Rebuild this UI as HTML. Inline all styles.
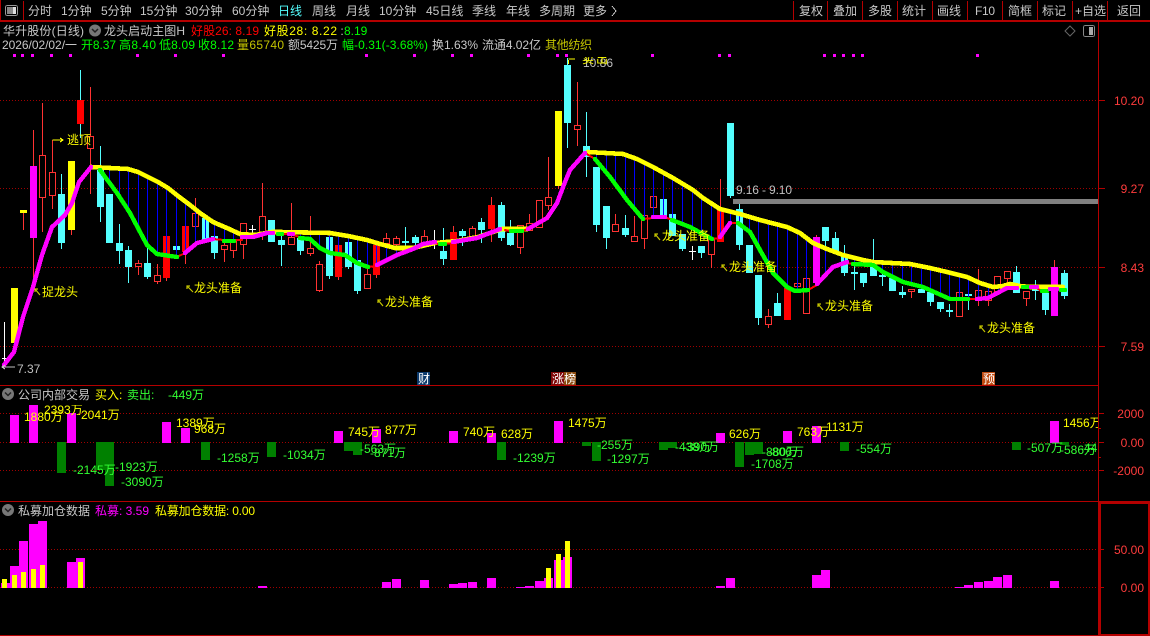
<!DOCTYPE html>
<html><head><meta charset="utf-8"><style>
html,body{margin:0;padding:0;background:#000;width:1150px;height:636px;overflow:hidden}
svg{display:block}
text{font-family:"Liberation Sans","WenQuanYi Zen Hei","Noto Sans CJK SC",sans-serif;font-size:12px;white-space:pre}
.g{fill:#c8c8c8}.y{fill:#ff0}.n{fill:#0f0}.gg{fill:#3f3}.m{fill:#f0f}.r{fill:#ff3c3c}.o{fill:#c4c400}
</style></head><body>
<svg width="1150" height="636" viewBox="0 0 1150 636" xmlns="http://www.w3.org/2000/svg" shape-rendering="crispEdges">
<defs>
<clipPath id="c1"><rect x="0" y="57" width="1098" height="328"/></clipPath>
<clipPath id="c2"><rect x="0" y="405" width="1098" height="96"/></clipPath>
</defs>
<rect width="1150" height="636" fill="#000"/>

<!-- frame -->
<g fill="#b40000">
<rect x="0" y="0" width="1" height="20"/>
<rect x="23" y="1" width="1" height="20"/>
<rect x="0" y="20" width="1150" height="2"/>
<rect x="1098" y="21" width="1" height="615"/>
<rect x="0" y="385" width="1098" height="1"/>
<rect x="0" y="501" width="1150" height="1"/>
<rect x="0" y="635" width="1150" height="1"/>
<rect x="1099" y="502" width="51" height="2"/>
<rect x="1099" y="634" width="51" height="2"/>
<rect x="1099" y="502" width="2" height="134"/>
<rect x="1148" y="502" width="2" height="134"/>
<path d="M793 1h1v20h-1zM827 1h1v20h-1zM862 1h1v20h-1zM897 1h1v20h-1zM932 1h1v20h-1zM967 1h1v20h-1zM1002 1h1v20h-1zM1037 1h1v20h-1zM1072 1h1v20h-1zM1107 1h1v20h-1z"/>
<path d="M1099 100h6v1h-6zM1099 188h6v1h-6zM1099 267h6v1h-6zM1099 346h6v1h-6zM1099 413h5v1h-5zM1099 442h5v1h-5zM1099 470h5v1h-5zM1099 428h2v1h-2zM1099 457h2v1h-2zM1099 549h5v1h-5zM1099 587h5v1h-5zM1099 568h2v1h-2z"/>
</g>

<!-- grid -->
<g stroke="#a00000" stroke-width="1" stroke-dasharray="1 2" fill="none">
<path d="M0 100.5H1098M0 188.5H1098M0 267.5H1098M0 346.5H1098M0 413.5H1098M0 442.5H1098M0 470.5H1098M0 549.5H1098M0 587.5H1098"/>
</g>

<!-- top bar -->
<rect x="5.5" y="5.5" width="12" height="10" rx="2" fill="none" stroke="#999"/>
<rect x="7" y="7" width="6" height="7" fill="#888"/>
<rect x="13" y="7" width="3" height="7" fill="#ddd"/>
<g class="g">
<text x="28" y="15">分时</text>
<text x="61" y="15">1分钟</text>
<text x="101" y="15">5分钟</text>
<text x="140" y="15">15分钟</text>
<text x="185" y="15">30分钟</text>
<text x="232" y="15">60分钟</text>
<text x="278" y="15" style="fill:#54ffff">日线</text>
<text x="312" y="15">周线</text>
<text x="346" y="15">月线</text>
<text x="379" y="15">10分钟</text>
<text x="426" y="15">45日线</text>
<text x="472" y="15">季线</text>
<text x="506" y="15">年线</text>
<text x="539" y="15">多周期</text>
<text x="583" y="15">更多</text>
<text x="799" y="15">复权</text>
<text x="833" y="15">叠加</text>
<text x="868" y="15">多股</text>
<text x="902" y="15">统计</text>
<text x="937" y="15">画线</text>
<text x="975" y="15" textLength="20">F10</text>
<text x="1008" y="15">简框</text>
<text x="1042" y="15">标记</text>
<text x="1075" y="15">+自选</text>
<text x="1117" y="15">返回</text>
</g>
<path d="M612 6l4 5-4 5" fill="none" stroke="#c8c8c8"/>

<!-- info lines -->
<text x="3" y="35" class="g" textLength="81">华升股份(日线)</text>
<circle cx="95" cy="30.5" r="6" fill="#777" shape-rendering="auto"/>
<path d="M92 29l3 3 3-3" fill="none" stroke="#222" stroke-width="1.5" shape-rendering="auto"/>
<text x="104" y="35" class="g" textLength="81">龙头启动主图H</text>
<text x="191" y="35" fill="#f00" textLength="68">好股26: 8.19</text>
<text x="264" y="35" class="y" textLength="73">好股28: 8.22</text>
<text x="337" y="35" class="g"> :</text>
<text x="344" y="35" class="n">8.19</text>

<text x="2" y="49" class="g" textLength="75">2026/02/02/一</text>
<text x="81" y="49" class="n" textLength="35">开8.37</text>
<text x="119" y="49" class="n" textLength="37">高8.40</text>
<text x="159" y="49" class="n" textLength="36">低8.09</text>
<text x="198" y="49" class="n" textLength="36">收8.12</text>
<text x="237" y="49" class="o" textLength="47">量65740</text>
<text x="288" y="49" class="g" textLength="50">额5425万</text>
<text x="342" y="49" class="n" textLength="86">幅-0.31(-3.68%)</text>
<text x="432" y="49" class="g" textLength="46">换1.63%</text>
<text x="482" y="49" class="g" textLength="59">流通4.02亿</text>
<text x="545" y="49" class="o" textLength="47">其他纺织</text>
<path d="M1070 26l5 5-5 5-5-5z" fill="none" stroke="#666" shape-rendering="auto"/>
<rect x="1083.5" y="25.5" width="11" height="11" rx="2" fill="none" stroke="#888"/>
<rect x="1089" y="27" width="4" height="8" fill="#aaa"/>

<!-- dots -->
<path fill="#f0f" d="M13 54h3v3h-3zM21 54h3v3h-3zM31 54h3v3h-3zM50 54h3v3h-3zM69 54h3v3h-3zM136 54h3v3h-3zM174 54h3v3h-3zM222 54h3v3h-3zM365 54h3v3h-3zM413 54h3v3h-3zM451 54h3v3h-3zM470 54h3v3h-3zM527 54h3v3h-3zM556 54h3v3h-3zM565 54h3v3h-3zM651 54h3v3h-3zM718 54h3v3h-3zM728 54h3v3h-3zM823 54h3v3h-3zM833 54h3v3h-3zM842 54h3v3h-3zM852 54h3v3h-3zM861 54h3v3h-3zM976 54h3v3h-3z"/>

<g clip-path="url(#c1)">
<!-- wicks red -->
<path fill="none" stroke="#ff3232" d="M23.5 213V230M33.5 130V287M42.5 103V232M52.5 140V209M71.5 230V235M90.5 87V194M138.5 260V275M157.5 264V284M166.5 278V281M185.5 252V264M195.5 198V247M224.5 238V262M233.5 250V258M243.5 244V259M262.5 183V240M291.5 203V245M310.5 216V256M319.5 261V292M338.5 277V280M367.5 260V274M376.5 275V278M386.5 233V250M396.5 236V250M424.5 230V246M453.5 226V232M472.5 226V228M491.5 197V242M520.5 247V254M529.5 214V223M548.5 157V210M558.5 186V189M577.5 82V146M615.5 214V224M634.5 216V242M644.5 238V249M711.5 254V268M720.5 179V210M768.5 309V328M816.5 235V237M911.5 291V298M978.5 269V306M988.5 300V306M1007.5 278V287M1026.5 298V306M1054.5 260V267"/>
<!-- wicks cyan -->
<path fill="none" stroke="#54ffff" d="M61.5 174V249M80.5 70V138M100.5 146V222M119.5 224V264M128.5 246V283M147.5 245V279M214.5 253V259M281.5 232V266M300.5 251V255M329.5 276V279M348.5 267V269M357.5 291V294M405.5 227V250M415.5 235V246M443.5 228V265M462.5 229V246M481.5 218V243M501.5 202V241M510.5 220V246M567.5 58V148M586.5 112V177M596.5 225V232M606.5 238V249M625.5 215V237M682.5 249V251M701.5 253V258M730.5 196V198M739.5 204V250M758.5 318V325M777.5 293V303M825.5 241V273M835.5 232V238M844.5 245V276M854.5 260V290M863.5 283V287M873.5 239V267M882.5 263V286M902.5 286V298M930.5 302V306M940.5 309V312M949.5 304V317M968.5 283V310M1016.5 266V272M1035.5 280V300M1045.5 310V315M1064.5 270V299"/>
<!-- white dojis -->
<path fill="none" stroke="#fff" d="M4.5 322V365M2 358.5H8M252.5 225V234M249 229.5H256M434.5 230V249M431 242.5H438M692.5 246V260M689 251.5H696"/>
<!-- cyan bodies -->
<path fill="#54ffff" d="M58 194h7v49h-7zM97 170h7v37h-7zM106 194h7v49h-7zM116 243h7v8h-7zM125 250h7v17h-7zM144 263h7v14h-7zM173 246h7v4h-7zM202 218h7v22h-7zM211 236h7v17h-7zM268 220h7v22h-7zM278 240h7v5h-7zM297 238h7v13h-7zM326 237h7v39h-7zM345 242h7v25h-7zM354 260h7v31h-7zM402 241h7v2h-7zM412 237h7v6h-7zM440 251h7v8h-7zM459 231h7v5h-7zM478 222h7v8h-7zM498 205h7v33h-7zM507 233h7v12h-7zM564 65h7v58h-7zM583 146h7v11h-7zM593 167h7v58h-7zM603 206h7v32h-7zM622 228h7v7h-7zM660 199h7v17h-7zM669 214h7v22h-7zM679 234h7v15h-7zM698 246h7v7h-7zM727 123h7v73h-7zM736 209h7v36h-7zM746 245h7v28h-7zM755 275h7v43h-7zM774 303h7v13h-7zM822 227h7v14h-7zM832 238h7v14h-7zM841 255h7v18h-7zM851 272h7v2h-7zM860 273h7v10h-7zM870 267h7v9h-7zM879 275h7v2h-7zM889 278h7v13h-7zM899 292h7v3h-7zM918 289h7v4h-7zM927 292h7v10h-7zM937 302h7v7h-7zM946 310h7v2h-7zM965 294h7v2h-7zM1013 272h7v21h-7zM1032 288h7v3h-7zM1042 293h7v17h-7zM1061 273h7v23h-7z"/>
<!-- hollow red bodies -->
<path fill="#000" stroke="#ff3232" d="M39.5 155.5h6v42h-6zM49.5 172.5h6v23h-6zM87.5 136.5h6v12h-6zM135.5 263.5h6v3h-6zM154.5 275.5h6v6h-6zM192.5 213.5h6v13h-6zM221.5 245.5h6v4h-6zM230.5 240.5h6v10h-6zM240.5 223.5h6v21h-6zM259.5 216.5h6v17h-6zM288.5 237.5h6v7h-6zM307.5 248.5h6v5h-6zM316.5 264.5h6v26h-6zM364.5 274.5h6v14h-6zM383.5 238.5h6v5h-6zM393.5 238.5h6v6h-6zM421.5 236.5h6v6h-6zM469.5 228.5h6v10h-6zM517.5 225.5h6v22h-6zM526.5 223.5h6v7h-6zM536.5 200.5h6v27h-6zM545.5 197.5h6v8h-6zM574.5 125.5h6v4h-6zM612.5 224.5h6v7h-6zM631.5 236.5h6v5h-6zM641.5 215.5h6v23h-6zM650.5 196.5h6v11h-6zM708.5 238.5h6v16h-6zM765.5 316.5h6v8h-6zM794.5 283.5h6v3h-6zM803.5 278.5h6v35h-6zM908.5 289.5h6v2h-6zM956.5 292.5h6v24h-6zM975.5 290.5h6v10h-6zM985.5 291.5h6v9h-6zM994.5 276.5h6v15h-6zM1004.5 271.5h6v7h-6zM1023.5 291.5h6v7h-6z"/>
<!-- solid -->
<path fill="#f00" d="M77 100h7v24h-7zM163 236h7v42h-7zM182 226h7v26h-7zM335 245h7v32h-7zM373 245h7v30h-7zM450 232h7v28h-7zM488 205h7v24h-7zM717 210h7v32h-7zM784 288h7v32h-7z"/>
<path fill="#ff0" d="M11 288h7v55h-7zM20 210h7v3h-7zM68 161h7v69h-7zM555 111h7v75h-7z"/>
<path fill="#f0f" d="M30 166h7v72h-7zM813 237h7v46h-7zM1051 267h7v49h-7z"/>
<!-- blue -->
<path fill="none" stroke="#0000ff" d="M109.5 168V182M119.5 168V197M128.5 169V212M138.5 172V230M147.5 177V245M157.5 182V255M166.5 188V257M176.5 194V257M185.5 203V252M195.5 210V243M205.5 217V238M214.5 223V238M224.5 228V240M233.5 232V240M243.5 235V238M300.5 232V237M310.5 232V240M319.5 233V247M329.5 233V253M338.5 233V254M348.5 235V257M357.5 238V262M367.5 240V267M376.5 243V265M386.5 245V260M396.5 248V255M596.5 152V159M606.5 153V172M615.5 153V183M625.5 154V197M634.5 157V210M644.5 161V220M653.5 167V217M663.5 172V217M672.5 177V219M682.5 183V224M692.5 189V228M701.5 197V234M711.5 203V239M720.5 209V238M730.5 212V223M739.5 214V223M749.5 217V232M758.5 220V248M768.5 222V265M777.5 225V278M787.5 227V287M797.5 232V291M806.5 238V291M825.5 249V272M844.5 256V263M854.5 259V264M863.5 261V265M873.5 262V265M882.5 263V272M892.5 263V277M902.5 264V282M911.5 264V284M921.5 267V287M930.5 268V291M940.5 270V295M949.5 272V299M959.5 275V299M968.5 278V299M978.5 282V299M988.5 286V298M998.5 286V294"/>
<!-- yellow MA -->
<g fill="none" stroke-linejoin="round" stroke-linecap="round">
<path stroke="#ff0" stroke-width="4.6" d="M91 167L110 168L128 169L138 172L148 177L158 182L168 188L178 196L190 205L200 213L213 222L227 228L240 234L255 235L272 232L280 232L330 233L348 236L367 240L380 244L395 248L413 248L435 243L457 241L478 237L502 229L528 229M588 152L623 154L637 159L653 167L673 178L693 190L703 198L720 209L740 214L760 220L787 227L800 233L813 243L827 249L843 255L863 260L873 262L910 264L930 268L947 272L967 277L980 283L993 287L1003 286L1010 284L1020 286L1030 287L1063 287"/>
<!-- red thin -->
<path stroke="#f00" stroke-width="2" d="M177 257L185 253M213 239L224 240M234 240L242 240M283 234L288 234M293 235L300 237M368 267L377 266M432 243L439 244M445 244L453 243M505 230L510 231M522 231L528 229M585 153L595 159M643 219L653 218M665 217L672 220M712 239L720 238M730 223L738 223M808 290L817 285M846 263L853 264M968 299L977 299M1037 288L1041 291M1047 291L1050 289M1057 289L1060 290"/>
<!-- green -->
<path stroke="#0f0" stroke-width="4.4" d="M100 170L117 193L130 213L147 245L157 254L177 257M224 241L234 241M278 234L282 234M300 238L310 239L320 248L330 253L345 255L357 263L368 267M440 244L445 244M511 231L522 231M595 159L610 177L627 200L643 219M672 220L690 227L712 239M738 223L750 232L760 250L773 273L787 287L795 291L808 290M853 264L873 265L883 272L903 282L923 287L950 299L968 299M1023 287L1028 287M1042 291L1047 291M1061 290L1065 290"/>
<!-- magenta -->
<path stroke="#f0f" stroke-width="4.4" d="M4 365L14 352L23 317L33 287L42 255L52 227L65 215L72 203L79 182L91 167M185 253L197 243L213 239M242 237L253 237L267 233L273 233M289 234L293 234M377 265L397 255L413 249L423 244L435 242M453 242L477 238L500 229M528 229L547 218L557 203L565 182L570 170L585 153M653 217L665 217M720 237L730 223M817 284L833 267L847 262M977 299L988 298L1007 288L1017 288M1031 287L1037 287M1050 289L1057 289"/>
</g>
<!-- gray bar -->
<rect x="733" y="199" width="365" height="5" fill="#808080"/>
<text x="736" y="194" fill="#c0c0c0" textLength="56">9.16 - 9.10</text>
<!-- labels -->
<path stroke="#ff0" fill="none" d="M52.5 140H63M60 138l3 2-3 2"/>
<text x="67" y="144" class="y">逃顶</text>
<g fill="none" stroke="#c4c400" stroke-width="1.2" shape-rendering="auto">
<path d="M40 295L35 289M35 292V289H38"/>
<path d="M193 292L187 286M187 289V286H190"/>
<path d="M383 306L378 300M378 303V300H381"/>
<path d="M660 240L655 234M655 237V234H658"/>
<path d="M727 271L722 265M722 268V265H725"/>
<path d="M823 310L818 304M818 307V304H821"/>
<path d="M985 332L980 326M980 329V326H983"/>
</g>
<g class="y">
<text x="42" y="296">捉龙头</text>
<text x="194" y="292">龙头准备</text>
<text x="385" y="306">龙头准备</text>
<text x="662" y="240">龙头准备</text>
<text x="729" y="271">龙头准备</text>
<text x="825" y="310">龙头准备</text>
<text x="987" y="332">龙头准备</text>
</g>
<path d="M2 367H15M5 365l-3 2 3 2" stroke="#c0c0c0" fill="none"/>
<text x="17" y="373" fill="#c0c0c0">7.37</text>
<text x="583" y="67" fill="#c0c0c0">10.86</text>
<path d="M568.5 60V64M568.5 59H575" stroke="#ff0" fill="none"/>
<text x="582" y="63" class="y" textLength="26">卖出</text>
</g>

<!-- tags -->
<rect x="417" y="372" width="13" height="13" fill="#0c3a6c"/>
<text x="418" y="383" fill="#fff">财</text>
<rect x="551" y="372" width="13" height="13" fill="#800808"/>
<rect x="564" y="372" width="12" height="13" fill="#8c4c10"/>
<text x="552" y="383" fill="#fff">涨</text>
<text x="564" y="383" fill="#fff">榜</text>
<rect x="982" y="372" width="13" height="13" fill="#c04a10"/>
<text x="983" y="383" fill="#fff">预</text>

<!-- axis labels -->
<g class="r" text-anchor="end">
<text x="1144" y="105">10.20</text>
<text x="1144" y="193">9.27</text>
<text x="1144" y="272">8.43</text>
<text x="1144" y="351">7.59</text>
<text x="1144" y="418">2000</text>
<text x="1144" y="447">0.00</text>
<text x="1144" y="475">-2000</text>
<text x="1144" y="554">50.00</text>
<text x="1144" y="592">0.00</text>
</g>

<!-- panel 2 -->
<circle cx="8" cy="394" r="6" fill="#777" shape-rendering="auto"/>
<path d="M5 392.5l3 3 3-3" fill="none" stroke="#222" stroke-width="1.5" shape-rendering="auto"/>
<text x="18" y="399" class="g">公司内部交易</text>
<text x="95" y="399" class="y">买入:</text>
<text x="127" y="399" class="gg">卖出:</text>
<text x="168" y="399" class="gg">-449万</text>
<path fill="#f0f" d="M10 415h9v28h-9zM29 405h9v38h-9zM67 413h9v30h-9zM162 422h9v21h-9zM181 428h9v15h-9zM334 431h9v12h-9zM372 429h9v14h-9zM449 431h9v12h-9zM487 433h9v10h-9zM554 421h9v22h-9zM716 433h9v10h-9zM783 431h9v12h-9zM812 426h9v17h-9zM1050 421h9v22h-9z"/>
<path fill="#008000" d="M57 442h9v31h-9zM96 442h9v28h-9zM105 442h9v44h-9zM201 442h9v18h-9zM267 442h9v15h-9zM344 442h9v9h-9zM353 442h9v13h-9zM497 442h9v18h-9zM582 442h9v4h-9zM592 442h9v19h-9zM659 442h9v8h-9zM668 442h9v6h-9zM735 442h9v25h-9zM745 442h9v13h-9zM754 442h9v12h-9zM840 442h9v9h-9zM1012 442h9v8h-9zM1060 442h9v3h-9z"/>
<g clip-path="url(#c2)">
<g class="y">
<text x="24" y="421">1880万</text>
<text x="44" y="414">2393万</text>
<text x="81" y="419">2041万</text>
<text x="176" y="427">1389万</text>
<text x="194" y="433">968万</text>
<text x="348" y="436">745万</text>
<text x="385" y="434">877万</text>
<text x="463" y="436">740万</text>
<text x="501" y="438">628万</text>
<text x="568" y="427">1475万</text>
<text x="729" y="438">626万</text>
<text x="797" y="436">763万</text>
<text x="826" y="431">1131万</text>
<text x="1063" y="427">1456万</text>
</g>
<g class="gg">
<text x="73" y="474">-2145万</text>
<text x="115" y="471">-1923万</text>
<text x="121" y="486">-3090万</text>
<text x="217" y="462">-1258万</text>
<text x="283" y="459">-1034万</text>
<text x="360" y="453">-563万</text>
<text x="370" y="457">-871万</text>
<text x="513" y="462">-1239万</text>
<text x="597" y="449">-255万</text>
<text x="607" y="463">-1297万</text>
<text x="675" y="451">-438万</text>
<text x="683" y="451">-390万</text>
<text x="751" y="468">-1708万</text>
<text x="762" y="456">-880万</text>
<text x="768" y="456">-806万</text>
<text x="856" y="453">-554万</text>
<text x="1027" y="452">-507万</text>
<text x="1060" y="454">-586万</text>
<text x="1080" y="452">-449</text>
</g>
</g>

<!-- panel 3 -->
<circle cx="8" cy="510" r="6" fill="#777" shape-rendering="auto"/>
<path d="M5 508.5l3 3 3-3" fill="none" stroke="#222" stroke-width="1.5" shape-rendering="auto"/>
<text x="18" y="515" class="g">私募加仓数据</text>
<text x="95" y="515" class="m" textLength="54">私募: 3.59</text>
<text x="155" y="515" class="y" textLength="100">私募加仓数据: 0.00</text>
<path fill="#f0f" d="M1 583h9v5h-9zM10 566h9v22h-9zM19 541h9v47h-9zM29 524h9v64h-9zM38 521h9v67h-9zM67 562h9v26h-9zM76 558h9v30h-9zM258 586h9v2h-9zM382 582h9v6h-9zM392 579h9v9h-9zM420 580h9v8h-9zM449 584h9v4h-9zM458 583h9v5h-9zM468 582h9v6h-9zM487 578h9v10h-9zM516 587h9v1h-9zM525 586h9v2h-9zM535 581h9v7h-9zM544 578h9v10h-9zM554 560h9v28h-9zM563 557h9v31h-9zM716 586h9v2h-9zM726 578h9v10h-9zM812 575h9v13h-9zM821 570h9v18h-9zM955 587h9v1h-9zM964 585h9v3h-9zM974 582h9v6h-9zM984 581h9v7h-9zM993 577h9v11h-9zM1003 575h9v13h-9zM1050 581h9v7h-9z"/>
<path fill="#ff0" d="M2 579h5v9h-5zM12 575h5v13h-5zM21 572h5v16h-5zM31 569h5v19h-5zM40 565h5v23h-5zM78 562h5v26h-5zM546 568h5v20h-5zM556 554h5v34h-5zM565 541h5v47h-5z"/>
</svg>
</body></html>
